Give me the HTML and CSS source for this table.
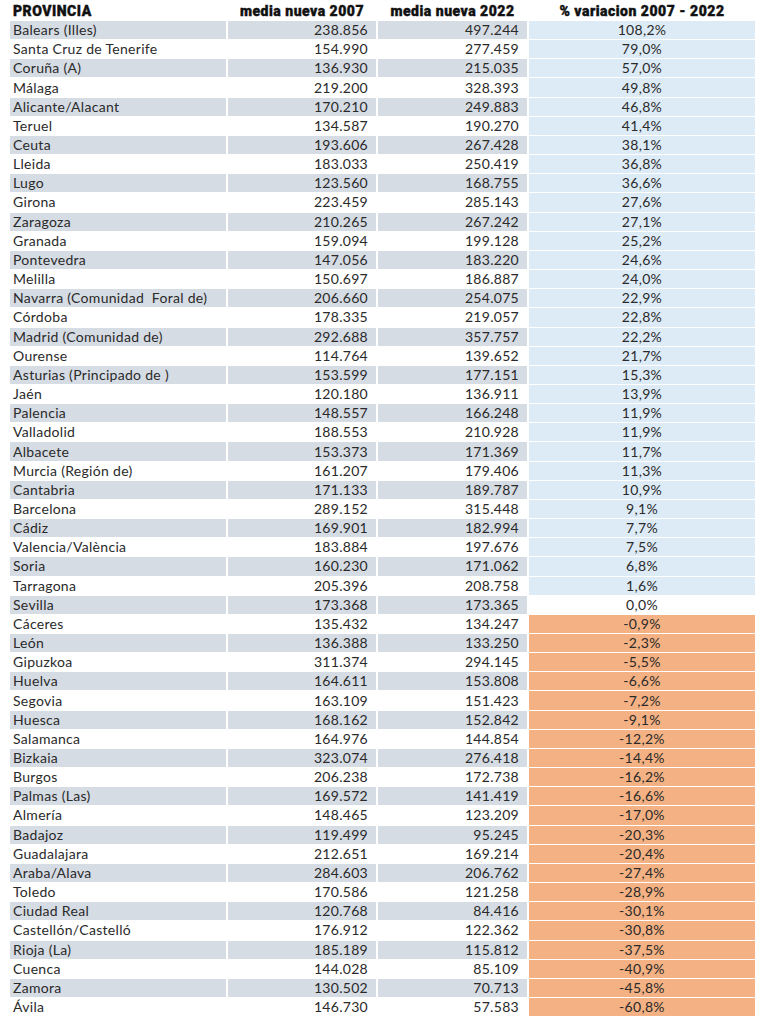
FILE: index.html
```html
<!DOCTYPE html>
<html lang="es">
<head>
<meta charset="utf-8">
<title>Variación media nueva 2007 - 2022</title>
<link rel="stylesheet" href="styles.css">
</head>
<body>
<div class="table">
  <div class="row head">
    <div class="c name">PROVINCIA</div>
    <div class="c mid">media nueva 2007</div>
    <div class="c mid">media nueva 2022</div>
    <div class="c mid">% variacion 2007 - 2022</div>
  </div>
  <div class="row odd"><div class="c name">Balears (Illes)</div><div class="c num">238.856</div><div class="c num">497.244</div><div class="c pct pos">108,2%</div></div>
  <div class="row"><div class="c name">Santa Cruz de Tenerife</div><div class="c num">154.990</div><div class="c num">277.459</div><div class="c pct pos">79,0%</div></div>
  <div class="row odd"><div class="c name">Coruña (A)</div><div class="c num">136.930</div><div class="c num">215.035</div><div class="c pct pos">57,0%</div></div>
  <div class="row"><div class="c name">Málaga</div><div class="c num">219.200</div><div class="c num">328.393</div><div class="c pct pos">49,8%</div></div>
  <div class="row odd"><div class="c name">Alicante/Alacant</div><div class="c num">170.210</div><div class="c num">249.883</div><div class="c pct pos">46,8%</div></div>
  <div class="row"><div class="c name">Teruel</div><div class="c num">134.587</div><div class="c num">190.270</div><div class="c pct pos">41,4%</div></div>
  <div class="row odd"><div class="c name">Ceuta</div><div class="c num">193.606</div><div class="c num">267.428</div><div class="c pct pos">38,1%</div></div>
  <div class="row"><div class="c name">Lleida</div><div class="c num">183.033</div><div class="c num">250.419</div><div class="c pct pos">36,8%</div></div>
  <div class="row odd"><div class="c name">Lugo</div><div class="c num">123.560</div><div class="c num">168.755</div><div class="c pct pos">36,6%</div></div>
  <div class="row"><div class="c name">Girona</div><div class="c num">223.459</div><div class="c num">285.143</div><div class="c pct pos">27,6%</div></div>
  <div class="row odd"><div class="c name">Zaragoza</div><div class="c num">210.265</div><div class="c num">267.242</div><div class="c pct pos">27,1%</div></div>
  <div class="row"><div class="c name">Granada</div><div class="c num">159.094</div><div class="c num">199.128</div><div class="c pct pos">25,2%</div></div>
  <div class="row odd"><div class="c name">Pontevedra</div><div class="c num">147.056</div><div class="c num">183.220</div><div class="c pct pos">24,6%</div></div>
  <div class="row"><div class="c name">Melilla</div><div class="c num">150.697</div><div class="c num">186.887</div><div class="c pct pos">24,0%</div></div>
  <div class="row odd"><div class="c name">Navarra (Comunidad &nbsp;Foral de)</div><div class="c num">206.660</div><div class="c num">254.075</div><div class="c pct pos">22,9%</div></div>
  <div class="row"><div class="c name">Córdoba</div><div class="c num">178.335</div><div class="c num">219.057</div><div class="c pct pos">22,8%</div></div>
  <div class="row odd"><div class="c name">Madrid (Comunidad de)</div><div class="c num">292.688</div><div class="c num">357.757</div><div class="c pct pos">22,2%</div></div>
  <div class="row"><div class="c name">Ourense</div><div class="c num">114.764</div><div class="c num">139.652</div><div class="c pct pos">21,7%</div></div>
  <div class="row odd"><div class="c name">Asturias (Principado de )</div><div class="c num">153.599</div><div class="c num">177.151</div><div class="c pct pos">15,3%</div></div>
  <div class="row"><div class="c name">Jaén</div><div class="c num">120.180</div><div class="c num">136.911</div><div class="c pct pos">13,9%</div></div>
  <div class="row odd"><div class="c name">Palencia</div><div class="c num">148.557</div><div class="c num">166.248</div><div class="c pct pos">11,9%</div></div>
  <div class="row"><div class="c name">Valladolid</div><div class="c num">188.553</div><div class="c num">210.928</div><div class="c pct pos">11,9%</div></div>
  <div class="row odd"><div class="c name">Albacete</div><div class="c num">153.373</div><div class="c num">171.369</div><div class="c pct pos">11,7%</div></div>
  <div class="row"><div class="c name">Murcia (Región de)</div><div class="c num">161.207</div><div class="c num">179.406</div><div class="c pct pos">11,3%</div></div>
  <div class="row odd"><div class="c name">Cantabria</div><div class="c num">171.133</div><div class="c num">189.787</div><div class="c pct pos">10,9%</div></div>
  <div class="row"><div class="c name">Barcelona</div><div class="c num">289.152</div><div class="c num">315.448</div><div class="c pct pos">9,1%</div></div>
  <div class="row odd"><div class="c name">Cádiz</div><div class="c num">169.901</div><div class="c num">182.994</div><div class="c pct pos">7,7%</div></div>
  <div class="row"><div class="c name">Valencia/València</div><div class="c num">183.884</div><div class="c num">197.676</div><div class="c pct pos">7,5%</div></div>
  <div class="row odd"><div class="c name">Soria</div><div class="c num">160.230</div><div class="c num">171.062</div><div class="c pct pos">6,8%</div></div>
  <div class="row"><div class="c name">Tarragona</div><div class="c num">205.396</div><div class="c num">208.758</div><div class="c pct pos">1,6%</div></div>
  <div class="row odd"><div class="c name">Sevilla</div><div class="c num">173.368</div><div class="c num">173.365</div><div class="c pct">0,0%</div></div>
  <div class="row"><div class="c name">Cáceres</div><div class="c num">135.432</div><div class="c num">134.247</div><div class="c pct neg">-0,9%</div></div>
  <div class="row odd"><div class="c name">León</div><div class="c num">136.388</div><div class="c num">133.250</div><div class="c pct neg">-2,3%</div></div>
  <div class="row"><div class="c name">Gipuzkoa</div><div class="c num">311.374</div><div class="c num">294.145</div><div class="c pct neg">-5,5%</div></div>
  <div class="row odd"><div class="c name">Huelva</div><div class="c num">164.611</div><div class="c num">153.808</div><div class="c pct neg">-6,6%</div></div>
  <div class="row"><div class="c name">Segovia</div><div class="c num">163.109</div><div class="c num">151.423</div><div class="c pct neg">-7,2%</div></div>
  <div class="row odd"><div class="c name">Huesca</div><div class="c num">168.162</div><div class="c num">152.842</div><div class="c pct neg">-9,1%</div></div>
  <div class="row"><div class="c name">Salamanca</div><div class="c num">164.976</div><div class="c num">144.854</div><div class="c pct neg">-12,2%</div></div>
  <div class="row odd"><div class="c name">Bizkaia</div><div class="c num">323.074</div><div class="c num">276.418</div><div class="c pct neg">-14,4%</div></div>
  <div class="row"><div class="c name">Burgos</div><div class="c num">206.238</div><div class="c num">172.738</div><div class="c pct neg">-16,2%</div></div>
  <div class="row odd"><div class="c name">Palmas (Las)</div><div class="c num">169.572</div><div class="c num">141.419</div><div class="c pct neg">-16,6%</div></div>
  <div class="row"><div class="c name">Almería</div><div class="c num">148.465</div><div class="c num">123.209</div><div class="c pct neg">-17,0%</div></div>
  <div class="row odd"><div class="c name">Badajoz</div><div class="c num">119.499</div><div class="c num">95.245</div><div class="c pct neg">-20,3%</div></div>
  <div class="row"><div class="c name">Guadalajara</div><div class="c num">212.651</div><div class="c num">169.214</div><div class="c pct neg">-20,4%</div></div>
  <div class="row odd"><div class="c name">Araba/Alava</div><div class="c num">284.603</div><div class="c num">206.762</div><div class="c pct neg">-27,4%</div></div>
  <div class="row"><div class="c name">Toledo</div><div class="c num">170.586</div><div class="c num">121.258</div><div class="c pct neg">-28,9%</div></div>
  <div class="row odd"><div class="c name">Ciudad Real</div><div class="c num">120.768</div><div class="c num">84.416</div><div class="c pct neg">-30,1%</div></div>
  <div class="row"><div class="c name">Castellón/Castelló</div><div class="c num">176.912</div><div class="c num">122.362</div><div class="c pct neg">-30,8%</div></div>
  <div class="row odd"><div class="c name">Rioja (La)</div><div class="c num">185.189</div><div class="c num">115.812</div><div class="c pct neg">-37,5%</div></div>
  <div class="row"><div class="c name">Cuenca</div><div class="c num">144.028</div><div class="c num">85.109</div><div class="c pct neg">-40,9%</div></div>
  <div class="row odd"><div class="c name">Zamora</div><div class="c num">130.502</div><div class="c num">70.713</div><div class="c pct neg">-45,8%</div></div>
  <div class="row"><div class="c name">Ávila</div><div class="c num">146.730</div><div class="c num">57.583</div><div class="c pct neg">-60,8%</div></div>
</div>
</body>
</html>
```

FILE: styles.css
```css
html, body {
  margin: 0;
  padding: 0;
  background: #ffffff;
}

body {
  font-family: "Lato", "Open Sans", "Liberation Sans", sans-serif;
  color: #2a2a2a;
  font-size: 14px;
  letter-spacing: 0.3px;
}

.table {
  display: flex;
  flex-direction: column;
  gap: 1px;
  padding: 1.5px 0 0 10px;
  width: 745px;
}

.row {
  display: grid;
  grid-template-columns: 216px 148px 149px 226px;
  column-gap: 2px;
  height: 18.157px;
}

.row.head {
  height: 18.5px;
  font-family: "Roboto", "Lato", sans-serif;
  font-weight: 900;
  font-size: 14px;
  letter-spacing: 0.5px;
  color: #111111;
  -webkit-text-stroke: 0.4px #111111;
}

.c {
  display: flex;
  align-items: center;
  white-space: nowrap;
  overflow: hidden;
  line-height: 1;
}

.name {
  padding-left: 3px;
}

.num {
  justify-content: flex-end;
  padding-right: 8px;
}

.mid,
.pct {
  justify-content: center;
}

.row.odd .name,
.row.odd .num {
  background: #d6dce4;
}

.pos {
  background: #ddebf7;
}

.neg {
  background: #f4b183;
}
```
